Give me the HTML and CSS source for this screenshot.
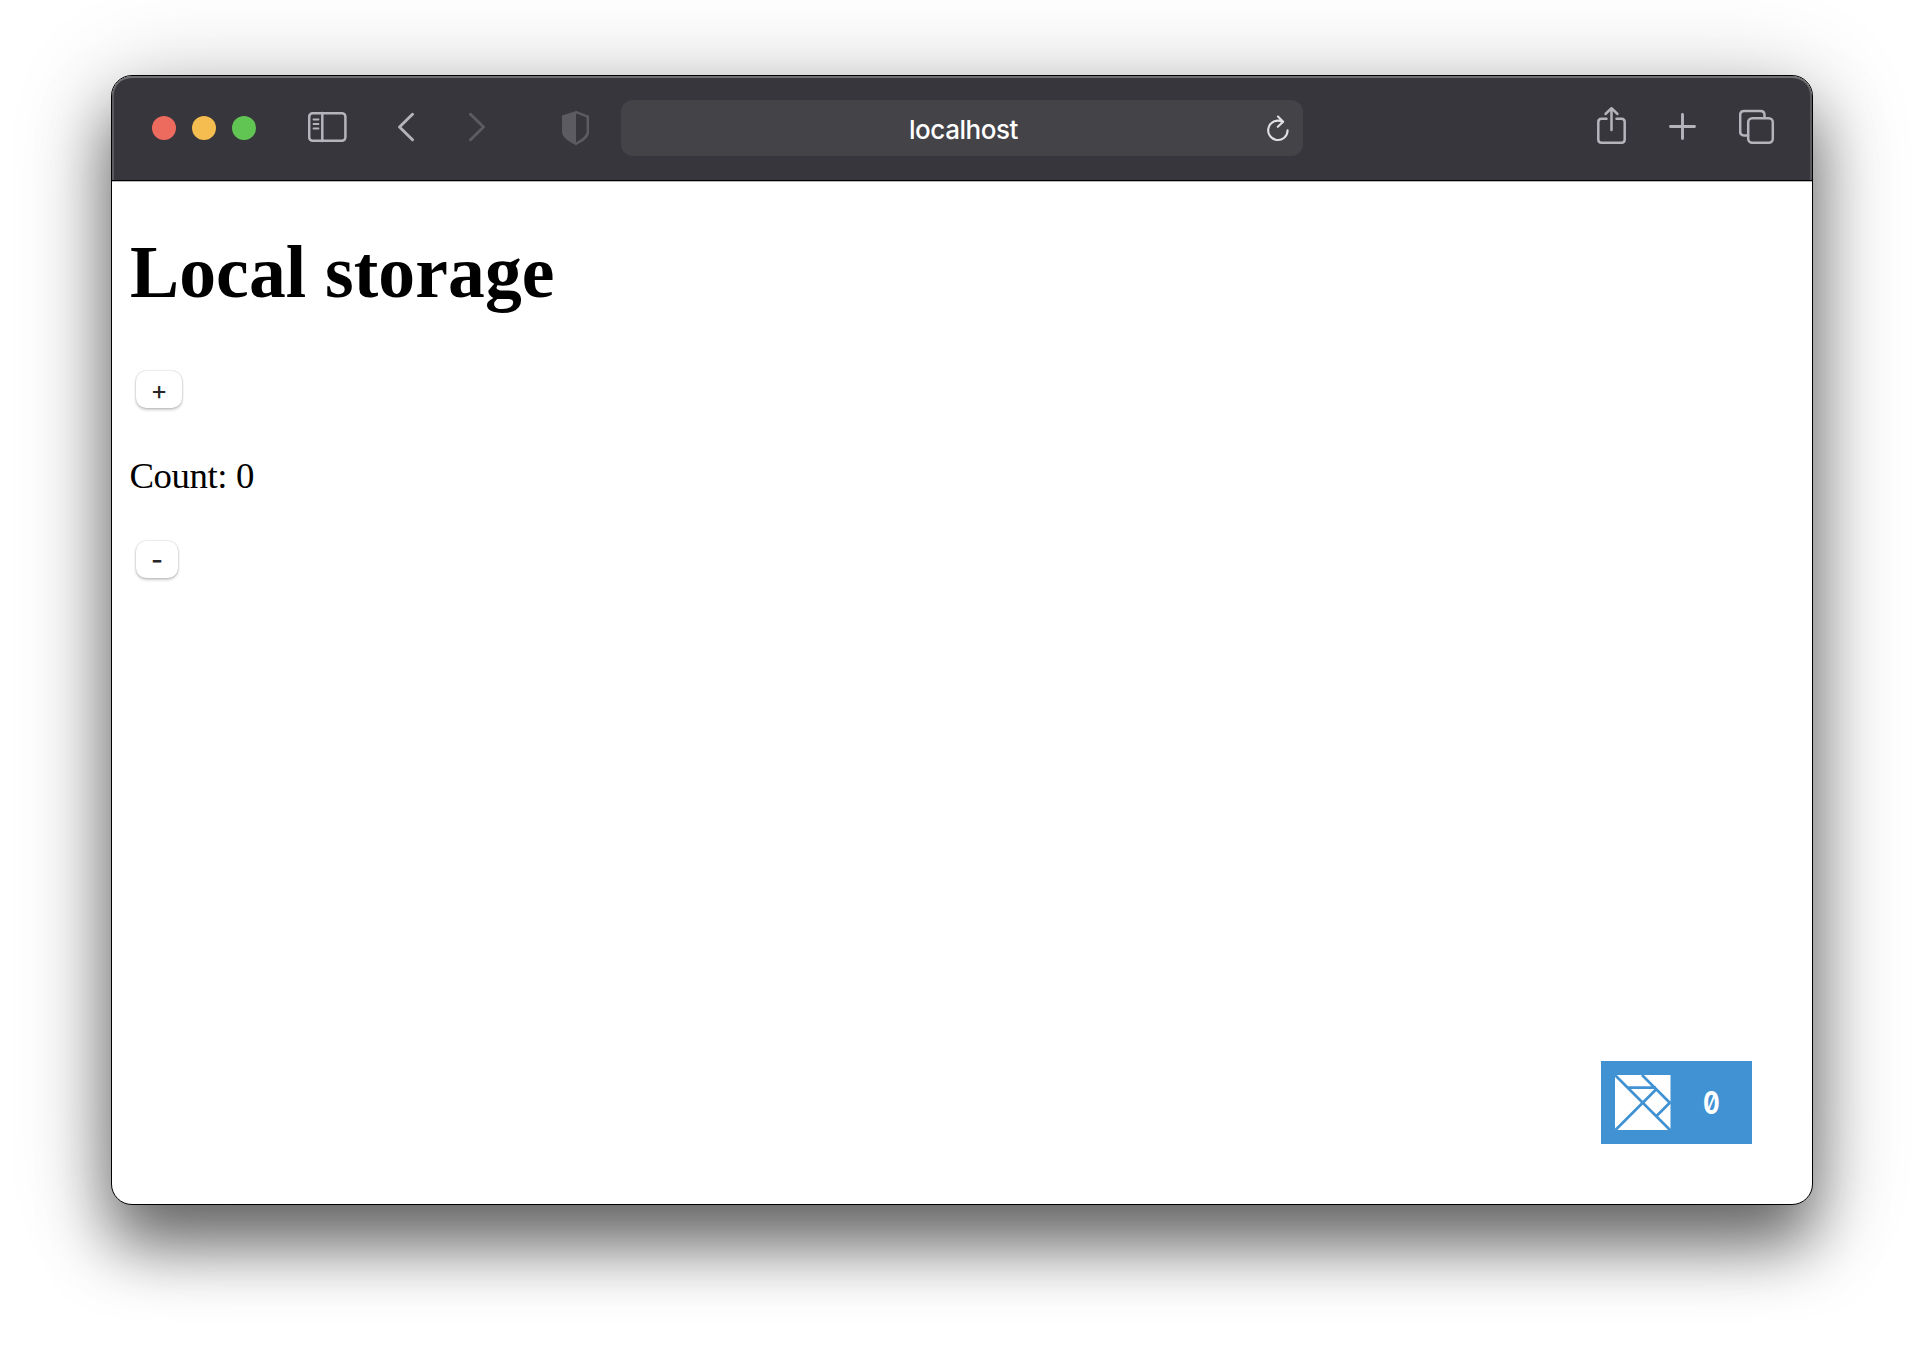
FILE: index.html
```html
<!DOCTYPE html>
<html lang="en">
<head>
<meta charset="utf-8">
<title>Local storage</title>
<link rel="stylesheet" href="styles.css">
</head>
<body>
<div class="window">
  <header class="toolbar">
    <div class="lights"><span class="light red"></span><span class="light yellow"></span><span class="light green"></span></div>
    <svg class="icon sidebar" width="40" height="56" viewBox="0 0 40 56"><rect x="1.2" y="13.2" width="36.2" height="27.6" rx="3.5"/><path d="M14.3 13V41"/><path class="thin" d="M5.5 19.5h5M5.5 24h5M5.5 28.5h5"/></svg>
    <svg class="icon back" width="18" height="56" viewBox="0 0 18 56"><path d="M14.500 14.2L1.500 27L14.500 39.8"/></svg>
    <svg class="icon forward dim" width="18" height="56" viewBox="0 0 18 56"><path d="M1.500 14.2L14.500 27L1.500 39.8"/></svg>
    <svg class="icon shield dim" width="28" height="56" viewBox="0 0 28 56"><path d="M14 12.200L25.800 16.500V32C25.800 37 20 40.500 14 43.800C8 40.500 1.200 37 1.200 32V16.500Z"/><path class="solid" d="M14 11.500L0.500 16V32C0.500 37.500 7 41 14 44.500Z"/></svg>
    <div class="address">
      <span class="host">localhost</span>
      <svg class="icon reload" width="24" height="56" viewBox="0 0 24 56"><path d="M20.600 30.300A9.700 9.700 0 1 1 15.500 21.800M11 16.600L16.200 21.700L10.800 26.800"/></svg>
    </div>
    <div class="actions">
      <svg class="icon" width="30" height="56" viewBox="0 0 30 56"><path d="M9.500 18.700H4.500Q1.300 18.700 1.300 22V39.500Q1.300 42.700 4.500 42.700H24.500Q27.700 42.700 27.700 39.500V22Q27.700 18.700 24.500 18.700H19.500M14.500 30V8.500M8.500 14L14.500 8.200L20.500 14"/></svg>
      <svg class="icon" width="28" height="56" viewBox="0 0 28 56"><path class="plus" d="M1.500 26.500H25.500M13.500 14.500V38.500"/></svg>
      <svg class="icon" width="36" height="56" viewBox="0 0 36 56"><rect x="9.200" y="18.200" width="24.600" height="24.600" rx="4"/><path d="M9 35.500H5Q1.200 35.500 1.200 31.500V15Q1.200 11 5.200 11H21.500Q25.500 11 25.500 15V18"/></svg>
    </div>
  </header>
  <main class="page">
    <h1>Local storage</h1>
    <button class="btn">+</button>
    <p>Count: 0</p>
    <button class="btn minus">-</button>
    <div class="debugger">
      <svg width="56" height="56" viewBox="0 0 56 56"><path fill="#fff" d="M0 0H55.500V55H0Z"/><path class="seam" d="M0 0L55.500 55.500M0 55.500L41.500 14M12 12.600H41M27 0L55.500 28.500M55.500 27L41.500 41"/></svg>
      <span class="steps">0</span>
    </div>
  </main>
</div>
</body>
</html>
```

FILE: styles.css
```css
* { box-sizing: border-box; }
body { margin: 0; padding: 75px 111px 0; width: 1924px; height: 1352px; overflow: hidden; background: #fff; }
.window {
  display: flex; flex-direction: column;
  width: 1702px; height: 1130px;
  border: 1px solid #000; border-radius: 21px; overflow: hidden;
  background: #fff;
  box-shadow: 0 40px 64px rgba(0,0,0,.53), 0 12px 100px rgba(0,0,0,.24);
}
.toolbar {
  display: flex; align-items: center; flex: none;
  height: 105px; padding: 0 37px 0 40px;
  background: #37363c; border-bottom: 1px solid #000;
  border-radius: 20px 20px 0 0;
  box-shadow: inset 0 2px #706f74, inset 2px 0 #5b5a5f, inset -2px 0 #5b5a5f, 0 1px #bbb;
}
.lights { display: flex; gap: 16px; }
.light { width: 24px; height: 24px; border-radius: 50%; }
.red { background: #ed6a5e; }
.yellow { background: #f5bd4f; }
.green { background: #61c554; }
.icon { flex: none; fill: none; stroke: #b5b4bb; stroke-width: 2.5; stroke-linecap: round; stroke-linejoin: round; }
.icon .thin { stroke-width: 1.8; }
.icon .plus { stroke-width: 2.9; }
.dim { stroke: #5c5b61; }
.dim .solid { fill: #5c5b61; stroke: none; }
.sidebar { margin-left: 52px; }
.back { margin-left: 50px; stroke-width: 2.9; }
.forward { margin-left: 53px; stroke-width: 2.9; }
.shield { margin-left: 75px; stroke-linejoin: miter; }
.address {
  display: flex; align-items: center; justify-content: flex-end;
  width: 682px; height: 56px; margin-left: 31px; padding-right: 12px;
  border-radius: 12px; background: #444348;
}
.host { width: 110px; margin-right: 248px; padding-top: 3px; font: 500 26px/32px Inter, sans-serif; letter-spacing: -.45px; color: #fff; white-space: nowrap; }
.reload { stroke: #e0e0e2; stroke-width: 2.1; }
.actions { display: flex; gap: 42px; margin-left: auto; }
.page {
  display: flex; flex-direction: column; align-items: flex-start; flex: 1;
  padding: 49px 60px 60px 18px;
  font: 36.8px/42px "Liberation Serif", serif; color: #000;
}
h1 { margin: 0 0 56px; font-size: 73.6px; line-height: 85px; font-weight: 700; letter-spacing: .12px; }
.btn {
  width: 46px; height: 37px; margin: 0 0 0 6px; padding: 1px 0 0;
  border: 0; border-radius: 10px; background: #fff; color: #262626;
  font: 26px/30px Inter, sans-serif;
  box-shadow: 0 0 2px rgba(0,0,0,.25), 0 2px 3px rgba(0,0,0,.2);
}
.minus { width: 42px; font-weight: 500; }
.page p { margin: 47px 0 44px; letter-spacing: -.4px; text-indent: -.6px; }
.debugger {
  display: flex; align-items: center; gap: 32px; align-self: flex-end;
  width: 151px; height: 83px; margin-top: auto; padding-left: 14px;
  background: #4192d3;
}
.seam { fill: none; stroke: #4192d3; stroke-width: 2.7; }
.steps { font: 700 31px/40px Inter, sans-serif; font-feature-settings: "zero"; color: #fff; transform: scaleX(.8); transform-origin: left; }
```
